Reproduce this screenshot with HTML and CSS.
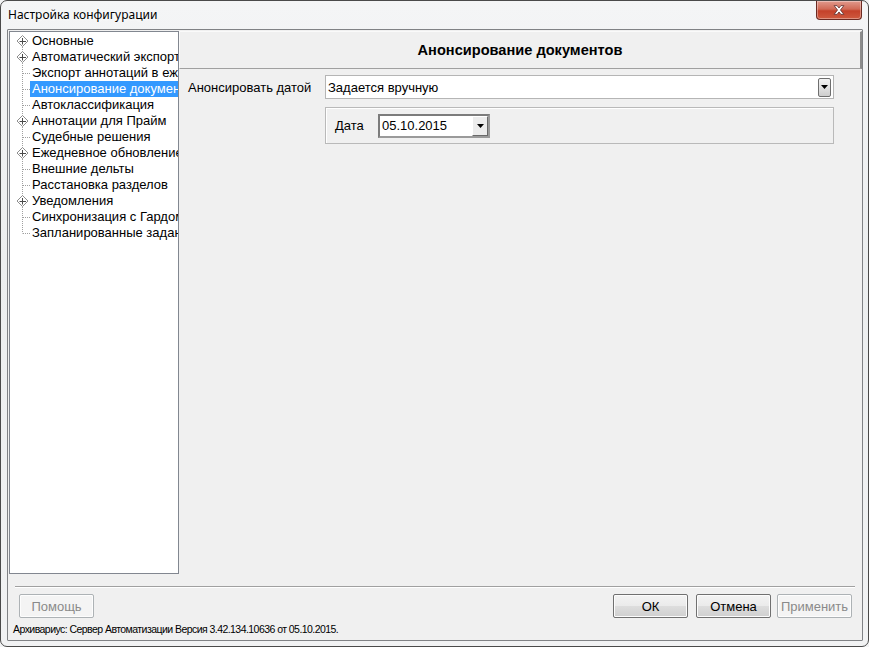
FILE: index.html
```html
<!DOCTYPE html>
<html lang="ru">
<head>
<meta charset="utf-8">
<title>Настройка конфигурации</title>
<link rel="stylesheet" href="styles.css">
</head>
<body>
<div class="window">
  <div class="titlebar">
    <span class="title">Настройка конфигурации</span>
    <span class="close">
      <svg width="45" height="18" viewBox="0 0 45 18">
        <path d="M17.5 4.5 L20.5 4.5 L22.5 7 L24.5 4.5 L27.5 4.5 L24 9 L27.5 13.5 L24.5 13.5 L22.5 11 L20.5 13.5 L17.5 13.5 L21 9 Z" fill="#fff" stroke="#5a2a2a" stroke-width="0.8" stroke-linejoin="round"/>
      </svg>
    </span>
  </div>
  <div class="client">
    <div class="main">
      <div class="tree">
        <ul>
          <li class="first"><svg class="ic" width="20" height="16"><line x1="12.5" y1="8" x2="12.5" y2="16" class="dl"/><polygon points="12.5,2.5 18,8 12.5,13.5 7,8" class="dm"/><path d="M9.5 8.5 H16 M12.5 5 V11.5" class="pl"/></svg><span>Основные</span></li>
          <li><svg class="ic" width="20" height="16"><line x1="12.5" y1="0" x2="12.5" y2="16" class="dl"/><polygon points="12.5,2.5 18,8 12.5,13.5 7,8" class="dm"/><path d="M9.5 8.5 H16 M12.5 5 V11.5" class="pl"/></svg><span>Автоматический экспорт</span></li>
          <li><svg class="ic" width="20" height="16"><line x1="12.5" y1="0" x2="12.5" y2="16" class="dl"/><line x1="13" y1="8.5" x2="20" y2="8.5" class="dl"/></svg><span>Экспорт аннотаций в ежедневное обновление</span></li>
          <li class="sel"><svg class="ic" width="20" height="16"><line x1="12.5" y1="0" x2="12.5" y2="16" class="dl"/><line x1="13" y1="8.5" x2="20" y2="8.5" class="dl"/></svg><span>Анонсирование документов</span></li>
          <li><svg class="ic" width="20" height="16"><line x1="12.5" y1="0" x2="12.5" y2="16" class="dl"/><line x1="13" y1="8.5" x2="20" y2="8.5" class="dl"/></svg><span>Автоклассификация</span></li>
          <li><svg class="ic" width="20" height="16"><line x1="12.5" y1="0" x2="12.5" y2="16" class="dl"/><polygon points="12.5,2.5 18,8 12.5,13.5 7,8" class="dm"/><path d="M9.5 8.5 H16 M12.5 5 V11.5" class="pl"/></svg><span>Аннотации для Прайм</span></li>
          <li><svg class="ic" width="20" height="16"><line x1="12.5" y1="0" x2="12.5" y2="16" class="dl"/><line x1="13" y1="8.5" x2="20" y2="8.5" class="dl"/></svg><span>Судебные решения</span></li>
          <li><svg class="ic" width="20" height="16"><line x1="12.5" y1="0" x2="12.5" y2="16" class="dl"/><polygon points="12.5,2.5 18,8 12.5,13.5 7,8" class="dm"/><path d="M9.5 8.5 H16 M12.5 5 V11.5" class="pl"/></svg><span>Ежедневное обновление</span></li>
          <li><svg class="ic" width="20" height="16"><line x1="12.5" y1="0" x2="12.5" y2="16" class="dl"/><line x1="13" y1="8.5" x2="20" y2="8.5" class="dl"/></svg><span>Внешние дельты</span></li>
          <li><svg class="ic" width="20" height="16"><line x1="12.5" y1="0" x2="12.5" y2="16" class="dl"/><line x1="13" y1="8.5" x2="20" y2="8.5" class="dl"/></svg><span>Расстановка разделов</span></li>
          <li><svg class="ic" width="20" height="16"><line x1="12.5" y1="0" x2="12.5" y2="16" class="dl"/><polygon points="12.5,2.5 18,8 12.5,13.5 7,8" class="dm"/><path d="M9.5 8.5 H16 M12.5 5 V11.5" class="pl"/></svg><span>Уведомления</span></li>
          <li><svg class="ic" width="20" height="16"><line x1="12.5" y1="0" x2="12.5" y2="16" class="dl"/><line x1="13" y1="8.5" x2="20" y2="8.5" class="dl"/></svg><span>Синхронизация с Гардом</span></li>
          <li><svg class="ic" width="20" height="16"><line x1="12.5" y1="0" x2="12.5" y2="8.5" class="dl"/><line x1="13" y1="8.5" x2="20" y2="8.5" class="dl"/></svg><span>Запланированные задания</span></li>
        </ul>
      </div>
      <div class="pane">
        <div class="pane-header">Анонсирование документов</div>
        <div class="form">
          <div class="row">
            <span class="label">Анонсировать датой</span>
            <div class="combo">
              <span class="combo-text">Задается вручную</span>
              <span class="combo-btn"><svg width="7" height="4"><path d="M0 0 H7 L3.5 4 Z" fill="#000"/></svg></span>
            </div>
          </div>
          <div class="group">
            <span class="label-small">Дата</span>
            <div class="datepick">
              <span class="dp-text">05.10.2015</span>
              <span class="dp-btn"><svg width="7" height="4"><path d="M0 0 H7 L3.5 4 Z" fill="#000"/></svg></span>
            </div>
          </div>
        </div>
      </div>
    </div>
    <div class="sep"></div>
    <div class="buttons">
      <button class="btn disabled help">Помощь</button>
      <span class="spacer"></span>
      <button class="btn ok">ОК</button>
      <button class="btn cancel">Отмена</button>
      <button class="btn disabled apply">Применить</button>
    </div>
    <div class="status">Архивариус: Сервер Автоматизации Версия 3.42.134.10636 от 05.10.2015.</div>
  </div>
</div>
</body>
</html>
```
FILE: styles.css
```css
* { box-sizing: border-box; }
html, body { margin: 0; padding: 0; }
body {
  width: 869px;
  height: 647px;
  overflow: hidden;
  background: #f2f3f4;
  font-family: "Liberation Sans", Arial, sans-serif;
}
.window {
  width: 869px;
  height: 647px;
  border: 1px solid #4a4a4a;
  border-radius: 7px;
  background: linear-gradient(180deg, #f4f5f6 0%, #eceeef 40%, #f1f2f3 100%);
  display: flex;
  flex-direction: column;
}
.titlebar {
  height: 28px;
  display: flex;
  align-items: flex-start;
}
.title {
  font-family: "Noto Sans", "Open Sans", sans-serif;
  font-size: 12px;
  color: #000;
  margin: 6px 0 0 7px;
  line-height: 16px;
  text-shadow: 0 0 6px #fff, 0 0 6px #fff;
}
.close {
  margin-left: auto;
  margin-right: 6px;
  width: 46px;
  height: 19px;
  border: 1px solid #6b2a22;
  border-top: none;
  border-radius: 0 0 4px 4px;
  background: linear-gradient(180deg, #e19a8d 0%, #d16a56 45%, #c4412a 55%, #cf5a3f 100%);
  box-shadow: inset 0 0 0 1px rgba(255,255,255,0.35);
  display: flex;
  align-items: center;
  justify-content: center;
}
.close svg { display: block; }
.client {
  margin: 0 5px 0 6px;
  height: 612px;
  border: 1px solid #808285;
  border-radius: 1px;
  background: #f0f0f0;
  display: flex;
  flex-direction: column;
}
.main {
  height: 544px;
  display: flex;
  padding-top: 1px;
}
.tree {
  width: 170px;
  height: 543px;
  margin-left: 1px;
  border: 1px solid #828790;
  background: #fff;
  overflow: hidden;
}
.tree ul {
  list-style: none;
  margin: 0;
  padding: 1px 0 0 0;
}
.tree li {
  height: 16px;
  display: flex;
  align-items: center;
  white-space: nowrap;
  font-size: 13px;
  color: #000;
}
.tree .ic { flex: 0 0 20px; display: block; }
.tree li span {
  padding: 0 2px;
  line-height: 16px;
  height: 16px;
}
.tree li.sel span {
  background: #3399ff;
  color: #fff;
  flex: 1;
}
.dl { stroke: #a0a0a0; stroke-width: 1; stroke-dasharray: 1 1; }
.dm { fill: #fff; stroke: #8e8e8e; stroke-width: 1; }
.pl { stroke: #4a4a4a; stroke-width: 1; fill: none; }
.pane {
  flex: 1;
  display: flex;
  flex-direction: column;
}
.pane-header {
  height: 38px;
  border-top: 1px solid #fafafa;
  border-left: 1px solid #fafafa;
  border-bottom: 1px solid #a0a0a0;
  border-right: 2px solid #8c8c8c;
  background: #f0f0f0;
  font-weight: bold;
  font-size: 14.6px;
  text-align: center;
  line-height: 37px;
  color: #000;
}
.form {
  padding: 6px 28px 0 9px;
  display: flex;
  flex-direction: column;
  gap: 8px;
}
.row {
  display: flex;
  align-items: center;
  height: 24px;
}
.label {
  width: 137px;
  font-size: 13px;
  color: #000;
}
.combo {
  flex: 1;
  height: 24px;
  border: 1px solid #b5b5b5;
  background: #fff;
  display: flex;
  align-items: center;
  padding: 0 2px 0 2px;
}
.combo-text { flex: 1; font-size: 13px; color: #000; }
.combo-btn {
  width: 13px;
  height: 19px;
  border: 1px solid #6e6e6e;
  border-radius: 2px;
  background: linear-gradient(180deg, #f4f4f4 0%, #e2e2e2 50%, #cdcdcd 100%);
  display: flex;
  align-items: center;
  justify-content: center;
}
.combo-btn svg, .dp-btn svg { display: block; }
.group {
  margin-left: 137px;
  height: 37px;
  border: 1px solid #b9b9b9;
  box-shadow: inset 1px 1px 0 #fff;
  display: flex;
  align-items: center;
  padding: 0 0 0 9px;
}
.label-small {
  width: 43px;
  font-size: 13px;
  color: #000;
}
.datepick {
  width: 112px;
  height: 24px;
  border: 2px solid #7c7c7c;
  border-right-color: #9a9a9a;
  border-bottom-color: #9a9a9a;
  background: #fff;
  display: flex;
  align-items: center;
  padding-left: 2px;
}
.dp-text { flex: 1; font-size: 13px; color: #000; }
.dp-btn {
  width: 16px;
  height: 20px;
  background: #ececec;
  border-top: 1px solid #fff;
  border-left: 1px solid #fff;
  border-right: 1px solid #6a6a6a;
  border-bottom: 1px solid #6a6a6a;
  display: flex;
  align-items: center;
  justify-content: center;
}
.sep {
  margin: 12px 7px 0 7px;
  height: 2px;
  border-top: 1px solid #a0a0a0;
  border-bottom: 1px solid #fff;
}
.buttons {
  display: flex;
  margin-top: 6px;
  padding: 0 10px 0 11px;
  height: 24px;
}
.spacer { flex: 1; }
.btn {
  height: 24px;
  width: 75px;
  padding: 0;
  font-family: "Liberation Sans", Arial, sans-serif;
  font-size: 13px;
  color: #000;
  border: 1px solid #707070;
  border-radius: 2px;
  background: linear-gradient(180deg, #f3f3f3 0%, #ebebeb 48%, #dddddd 52%, #cfcfcf 100%);
  box-shadow: inset 0 0 0 1px #fcfcfc;
}
.btn.disabled {
  color: #8a8a8a;
  border-color: #adb2b5;
  background: #f4f4f4;
  box-shadow: inset 0 0 0 1px #fdfdfd;
}
.btn.cancel { margin-left: 8px; }
.btn.apply { margin-left: 6px; }
.status {
  margin-top: 4px;
  padding-left: 5px;
  font-family: "Liberation Sans", Arial, sans-serif;
  font-size: 10.5px;
  letter-spacing: -0.55px;
  line-height: 14px;
  color: #000;
}
```
